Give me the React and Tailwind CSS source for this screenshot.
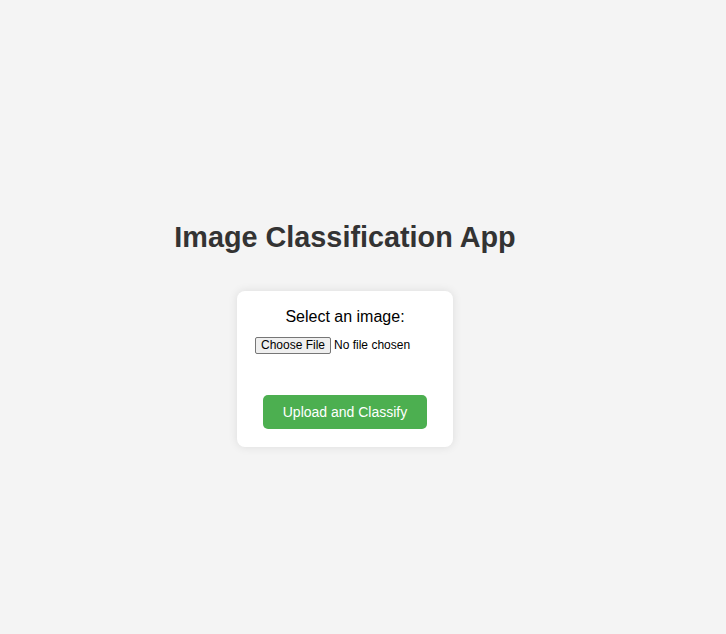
export default function App() {
  return (
    <div className="min-h-screen w-full bg-[#f4f4f4] font-['Liberation_Sans',Arial,sans-serif] text-[#333]">
      <div className="flex w-[690px] flex-col items-center pt-[221px]">
        <h1 className="text-[28.8px] font-bold leading-[33px] text-[#333]">Image Classification App</h1>
        <div className="mt-[37px] flex w-[216px] flex-col items-center rounded-lg bg-white px-[18px] pt-[17px] pb-[18px] shadow-[0_0_10px_rgba(0,0,0,0.1)]">
          <label htmlFor="file" className="block text-base leading-[18px] text-black">
            Select an image:
          </label>
          <input
            id="file"
            type="file"
            accept="image/*"
            className="mt-[11px] w-[180px] font-['Liberation_Sans',Arial,sans-serif] text-[12px] leading-[17px] text-black file:mr-[3px] file:rounded-[2px] file:border file:border-[#767676] file:bg-[#efefef] file:px-[5px] file:py-0 file:text-[12px] file:leading-[15px] file:text-black"
          />
          <button className="mt-[41px] rounded-[5px] bg-[#4caf50] px-5 py-[9px] text-sm leading-4 text-white">
            Upload and Classify
          </button>
        </div>
      </div>
    </div>
  );
}
